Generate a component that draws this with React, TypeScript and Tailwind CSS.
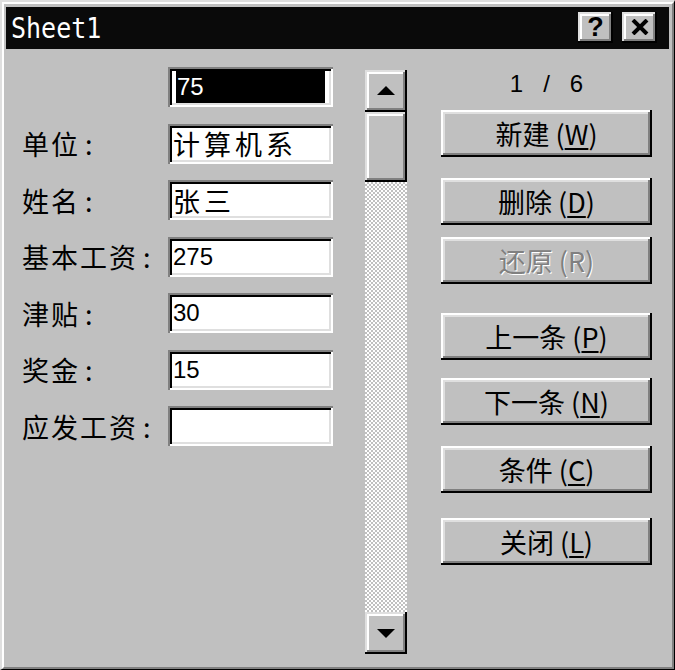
import React from "react";

const raisedBtn =
  "shadow-[inset_-2px_-2px_0_#000,inset_2px_2px_0_#fff,inset_-4px_-4px_0_#808080,inset_4px_4px_0_#dfdfdf]";
const raisedScroll =
  "shadow-[inset_-2px_-2px_0_#000,inset_2px_2px_0_#dfdfdf,inset_-4px_-4px_0_#808080,inset_4px_4px_0_#fff]";
const sunken =
  "shadow-[inset_2px_2px_0_#808080,inset_-2px_-2px_0_#fff,inset_4px_4px_0_#000,inset_-4px_-4px_0_#dfdfdf]";

const cjk = "font-['Noto_Sans_CJK_SC',sans-serif]";
const latin = "font-['Liberation_Sans','Noto_Sans_CJK_SC',sans-serif]";

type Row = { label: string; value: string; selected?: boolean; cjkValue?: boolean };

const rows: Row[] = [
  { label: "", value: "75", selected: true },
  { label: "单位", value: "计算机系", cjkValue: true },
  { label: "姓名", value: "张三", cjkValue: true },
  { label: "基本工资", value: "275" },
  { label: "津贴", value: "30" },
  { label: "奖金", value: "15" },
  { label: "应发工资", value: "" },
];

type Btn = { text: string; key: string; mt: string; disabled?: boolean };

const buttons: Btn[] = [
  { text: "新建", key: "W", mt: "mt-[11px]" },
  { text: "删除", key: "D", mt: "mt-[21px]" },
  { text: "还原", key: "R", mt: "mt-[12px]", disabled: true },
  { text: "上一条", key: "P", mt: "mt-[29px]" },
  { text: "下一条", key: "N", mt: "mt-[18px]" },
  { text: "条件", key: "C", mt: "mt-[21px]" },
  { text: "关闭", key: "L", mt: "mt-[25px]" },
];

function Field({ row }: { row: Row }) {
  return (
    <div className={`w-[165px] h-[40px] bg-white p-[4px] flex ${sunken}`}>
      {row.selected ? (
        <div className="mx-[4px] flex-1 bg-black flex items-center pl-[1px]">
          <span className={`${latin} text-[24px] leading-none text-white`}>{row.value}</span>
        </div>
      ) : (
        <div className="flex-1 flex items-center pl-[1px]">
          <span
            className={`${row.cjkValue ? cjk + " text-[27px] tracking-[4px]" : latin + " text-[24px]"} leading-none text-black whitespace-nowrap`}
          >
            {row.value}
          </span>
        </div>
      )}
    </div>
  );
}

function Arrow({ up }: { up?: boolean }) {
  return (
    <svg width="18" height="10" viewBox="0 0 18 10">
      {up ? (
        <polygon points="0,9 9,0 18,9" fill="#000" />
      ) : (
        <polygon points="0,1 18,1 9,10" fill="#000" />
      )}
    </svg>
  );
}

export default function App() {
  return (
    <div className="w-[675px] h-[670px] bg-[#c0c0c0] border-t-2 border-l-2 border-t-[#dfdfdf] border-l-[#dfdfdf] border-r border-b border-r-black border-b-black">
      <div className="h-full flex flex-col border-t-2 border-l-2 border-t-white border-l-white border-r-2 border-b-2 border-r-[#808080] border-b-[#808080]">
        {/* Title bar */}
        <div className="mt-[3px] ml-[2px] mr-[3px] h-[42px] shrink-0 bg-[#0a0a0a] flex items-center pl-[5px] pr-[12px]">
          <span className="text-white text-[25px] leading-none font-['DejaVu_Sans_Mono',monospace] scale-y-[1.12] origin-center">
            Sheet1
          </span>
          <div className="ml-auto flex gap-[9px] -mt-[2px]">
            <div
              className={`w-[35px] h-[31px] bg-[#c0c0c0] flex items-center justify-center ${raisedScroll}`}
            >
              <span className="font-['Liberation_Sans',sans-serif] font-bold text-[27px] leading-none text-black">
                ?
              </span>
            </div>
            <div
              className={`w-[35px] h-[31px] bg-[#c0c0c0] flex items-center justify-center ${raisedScroll}`}
            >
              <svg width="18" height="16" viewBox="0 0 18 16">
                <path d="M2 1 L16 15 M16 1 L2 15" stroke="#000" strokeWidth="4" />
              </svg>
            </div>
          </div>
        </div>

        {/* Body */}
        <div className="flex flex-1">
          {/* Labels + fields */}
          <div className="ml-[18px] pt-[18px] flex flex-col gap-[16.5px]">
            {rows.map((r, i) => (
              <div key={i} className="flex items-center h-[40px]">
                <div className={`w-[146px] ${cjk} text-[27px] leading-none text-black flex items-center`}>
                  {r.label && (
                    <>
                      <span className="tracking-[2px]">{r.label}</span>
                      <span className="ml-[5px]">:</span>
                    </>
                  )}
                </div>
                <Field row={r} />
              </div>
            ))}
          </div>

          {/* Scrollbar */}
          <div className="ml-[32px] mt-[21px] w-[42px] h-[584px] flex flex-col">
            <div className={`h-[42px] shrink-0 bg-[#c0c0c0] flex items-center justify-center ${raisedScroll}`}>
              <Arrow up />
            </div>
            <div className={`h-[70px] shrink-0 bg-[#c0c0c0] ${raisedScroll}`} />
            <div className="flex-1 bg-[repeating-conic-gradient(#c0c0c0_0%_25%,#ffffff_0%_50%)] bg-size-[4px_4px]" />
            <div className={`h-[42px] shrink-0 bg-[#c0c0c0] flex items-center justify-center ${raisedScroll}`}>
              <Arrow />
            </div>
          </div>

          {/* Right column */}
          <div className="ml-[34px] mt-[20px] w-[211px] flex flex-col">
            <div className={`h-[30px] flex items-center justify-center ${latin} text-[24px] leading-none text-black whitespace-pre`}>
              {"1   /   6"}
            </div>
            {buttons.map((b) => (
              <div
                key={b.key}
                className={`${b.mt} h-[47px] bg-[#c0c0c0] flex items-center justify-center ${raisedBtn}`}
              >
                <span
                  className={`${cjk} text-[27px] leading-none whitespace-pre ${
                    b.disabled ? "text-[#808080] [text-shadow:1px_1px_0_#ffffff]" : "text-black"
                  }`}
                >
                  {b.text + " ("}
                  <span className={b.disabled ? "" : "underline underline-offset-[3px]"}>{b.key}</span>
                  {")"}
                </span>
              </div>
            ))}
          </div>
        </div>
      </div>
    </div>
  );
}
